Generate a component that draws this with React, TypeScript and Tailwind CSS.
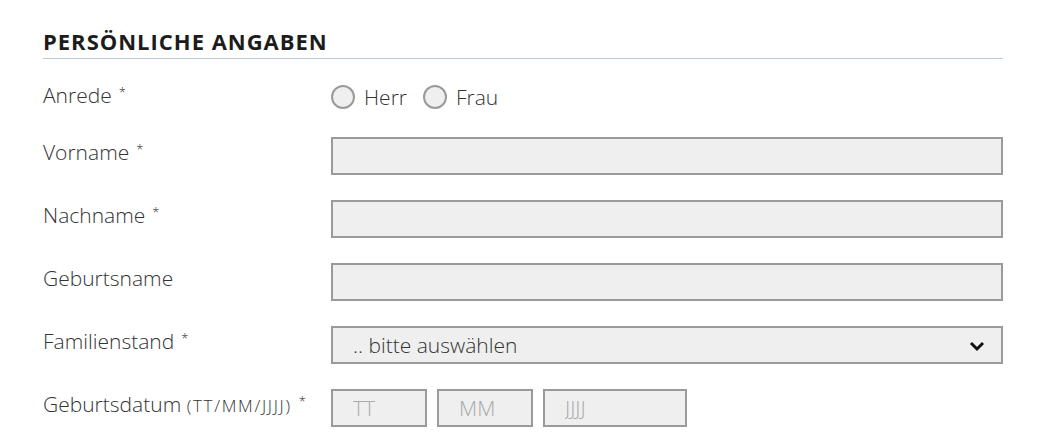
import React from 'react';

const labelCls = "w-[288px] shrink-0 pt-[5px] text-[21px] leading-5 font-light text-[#333]";
const inputCls =
  "h-[38px] border-2 border-[#9a9a9a] bg-[#efefef] px-5 text-[21px] font-light text-[#333] outline-none placeholder:text-[#aaa]";

function Req() {
  return <span className="ml-[7px] text-[13px] align-top relative -top-[3px]">*</span>;
}

function TextRow({ label, required, first }: { label: string; required?: boolean; first?: boolean }) {
  return (
    <div className={`${first ? 'mt-[28px]' : 'mt-[25px]'} flex items-start`}>
      <label className={labelCls}>
        {label}
        {required && <Req />}
      </label>
      <input type="text" className={`${inputCls} flex-1 min-w-0`} />
    </div>
  );
}

function Radio({ label }: { label: string }) {
  return (
    <label className="flex items-center gap-[9px]">
      <input
        type="radio"
        name="anrede"
        className="appearance-none w-6 h-6 rounded-full border-2 border-[#9a9a9a] bg-[#efefef] m-0"
      />
      <span className="text-[21px] leading-5 font-light text-[#333]">{label}</span>
    </label>
  );
}

export default function App() {
  return (
    <div className="bg-white w-[1050px] h-[444px] overflow-hidden" style={{ fontFamily: '"Open Sans", "Liberation Sans", sans-serif' }}>
      <div className="ml-[43px] w-[960px]">
        {/* Section title */}
        <h2 className="pt-[27px] pb-[3px] border-b border-[#b9cad4] text-[22px] leading-[28px] font-bold tracking-[0.045em] text-[#1c1c1c] uppercase">
          Persönliche Angaben
        </h2>

        {/* Anrede */}
        <div className="mt-[26px] flex items-start">
          <div className="w-[288px] shrink-0 text-[21px] leading-5 font-light text-[#333]">
            Anrede<Req />
          </div>
          <div className="flex items-center gap-4">
            <Radio label="Herr" />
            <Radio label="Frau" />
          </div>
        </div>

        <TextRow label="Vorname" required first />
        <TextRow label="Nachname" required />
        <TextRow label="Geburtsname" />

        {/* Familienstand */}
        <div className="mt-[25px] flex items-start">
          <label className={labelCls}>
            Familienstand<Req />
          </label>
          <div className="flex-1 h-[38px] border-2 border-[#9a9a9a] bg-[#efefef] pl-5 pr-4 flex items-center justify-between">
            <span className="text-[21px] leading-5 font-light text-[#333]">.. bitte auswählen</span>
            <svg width="16" height="11" viewBox="0 0 16 11" className="mt-[3px]">
              <polyline points="2,2 8,8 14,2" fill="none" stroke="#111" strokeWidth="3" />
            </svg>
          </div>
        </div>

        {/* Geburtsdatum */}
        <div className="mt-[25px] flex items-start">
          <label className={labelCls}>
            Geburtsdatum <span className="text-[17px] tracking-[0.1em] uppercase">(TT/MM/JJJJ)</span>
            <Req />
          </label>
          <div className="flex gap-[10px]">
            <input type="text" placeholder="TT" className={`${inputCls} w-[96px]`} />
            <input type="text" placeholder="MM" className={`${inputCls} w-[96px]`} />
            <input type="text" placeholder="JJJJ" className={`${inputCls} w-[144px]`} />
          </div>
        </div>
      </div>
    </div>
  );
}
